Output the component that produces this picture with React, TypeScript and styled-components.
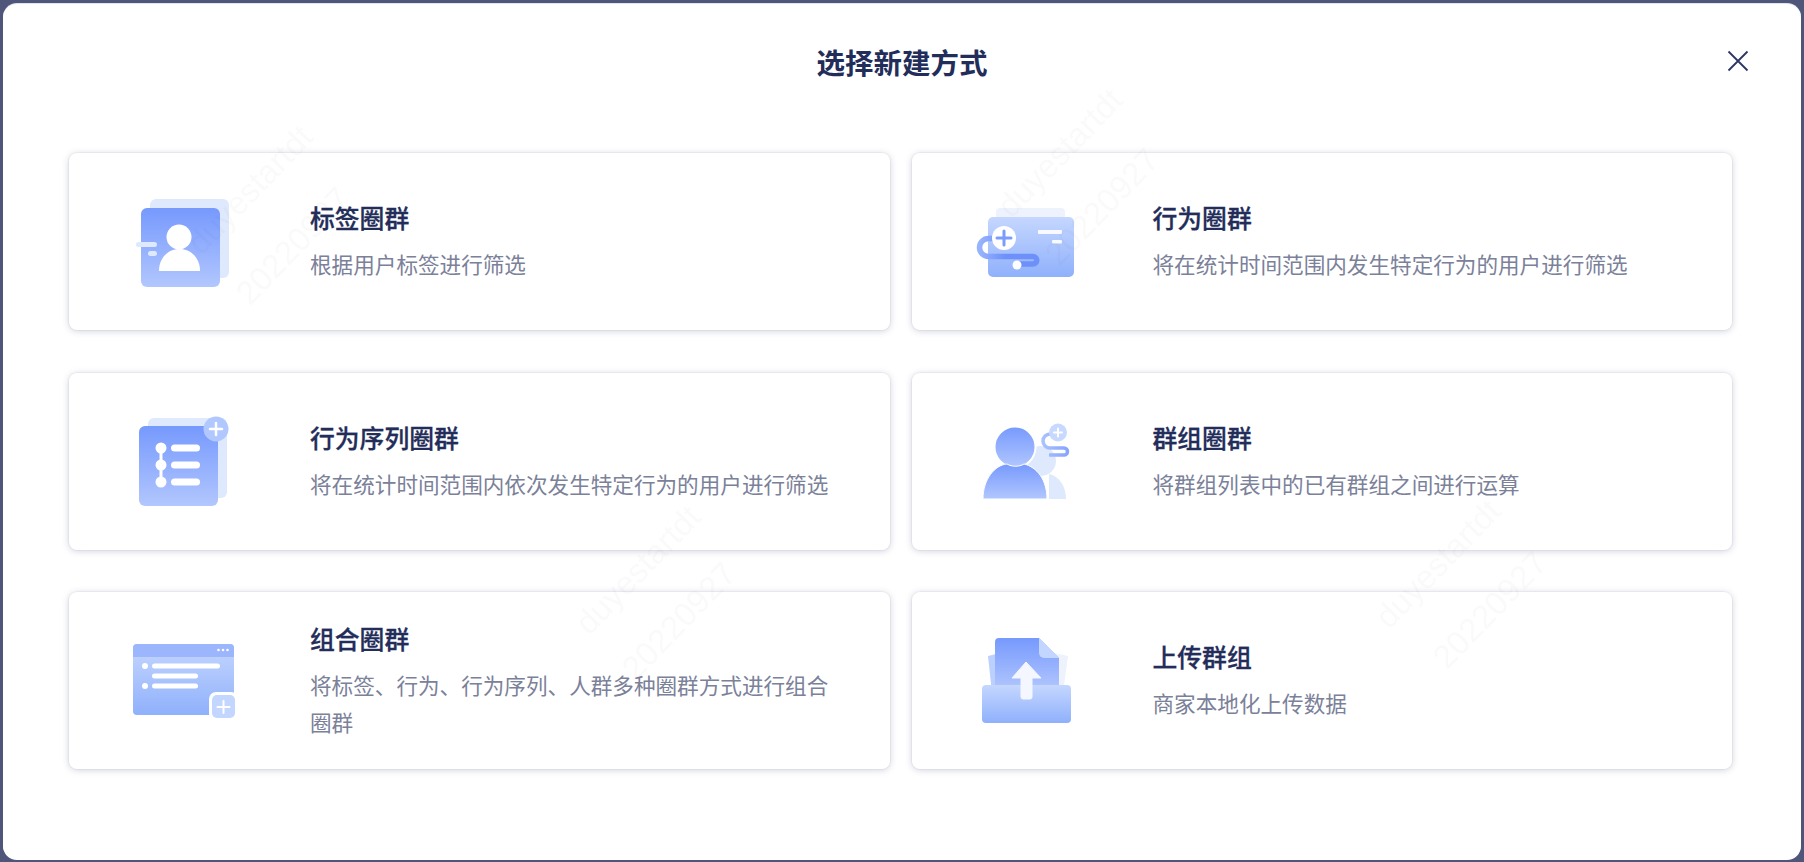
import type { ReactNode } from "react";
import styled, { createGlobalStyle } from "styled-components";

const GlobalStyle = createGlobalStyle`
  html, body { margin: 0; height: 100%; overflow: hidden; }
  body {
    background: #4f5679;
    font-family: "Noto Sans CJK SC", "Noto Sans", "Liberation Sans", sans-serif;
  }
`;

// shared gradients for the illustrations
const Grads = ({ id }: { id: string }) => (
  <defs>
    <linearGradient id={`${id}-deep`} x1="0" y1="0" x2="0" y2="1">
      <stop offset="0" stopColor="#7699fd" />
      <stop offset="1" stopColor="#b2c7fe" />
    </linearGradient>
    <linearGradient id={`${id}-soft`} x1="0" y1="0" x2="0" y2="1">
      <stop offset="0" stopColor="#c5d7ff" />
      <stop offset="1" stopColor="#8fb0fb" />
    </linearGradient>
    <linearGradient id={`${id}-tube`} x1="0" y1="0" x2="1" y2="0">
      <stop offset="0" stopColor="#98b3fd" />
      <stop offset="0.45" stopColor="#6d90fb" />
      <stop offset="1" stopColor="#6d90fb" />
    </linearGradient>
    <linearGradient id={`${id}-thin`} x1="0" y1="0" x2="1" y2="0">
      <stop offset="0" stopColor="#a9c1fe" />
      <stop offset="1" stopColor="#86a5fc" />
    </linearGradient>
  </defs>
);

const TagIcon = () => (
  <svg width="120" height="121" viewBox="125 181 120 121">
    <Grads id="tag" />
    <rect x="150" y="199" width="79" height="79" rx="6" fill="#dfe9fd" />
    <rect x="141" y="208" width="79" height="79" rx="6" fill="url(#tag-deep)" />
    <circle cx="179" cy="237" r="12.5" fill="#fff" />
    <path d="M159 271c0-13 9-22 20.500-22s20.500 9 20.500 22z" fill="#fff" />
    <rect x="136" y="242" width="21" height="5" rx="2.500" fill="#dfe9fd" />
    <rect x="148" y="251" width="9" height="5" rx="2.500" fill="#dfe9fd" />
  </svg>
);

const BehaviorIcon = () => (
  <svg width="120" height="121" viewBox="967 181 120 121">
    <Grads id="beh" />
    <rect x="995" y="208" width="69" height="20" rx="4" fill="#edf2fd" />
    <rect x="987" y="217" width="86" height="60" rx="5" fill="url(#beh-soft)" />
    <path
      d="M993 238.500H987.500A9 9 0 0 0 987.500 256.500H1032A3.750 3.750 0 0 1 1032 264H1016"
      fill="none"
      stroke="url(#beh-tube)"
      strokeWidth="5.500"
    />
    <circle cx="1003" cy="238" r="12" fill="#fff" />
    <path d="M1003 231v14M996 238h14" stroke="#7a9cfd" strokeWidth="3" strokeLinecap="round" />
    <circle cx="1016" cy="265" r="4.500" fill="#fff" />
    <rect x="1037" y="230" width="24" height="4" rx="1" fill="#fff" opacity=".9" />
    <rect x="1051" y="240" width="10" height="3.500" rx="1" fill="#fff" opacity=".9" />
  </svg>
);

const SequenceIcon = () => (
  <svg width="120" height="121" viewBox="125 400 120 121">
    <Grads id="seq" />
    <rect x="148" y="417" width="79" height="80" rx="6" fill="#dfe9fd" />
    <rect x="139" y="425" width="79" height="80" rx="6" fill="url(#seq-deep)" />
    <circle cx="216" cy="428" r="12.500" fill="#b0c8fe" />
    <path d="M216 422v12M210 428h12" stroke="#fff" strokeWidth="2.500" strokeLinecap="round" />
    <path d="M161 447v34" stroke="#fff" strokeWidth="3" />
    <circle cx="161" cy="447" r="5.500" fill="#fff" />
    <circle cx="161" cy="464" r="5.500" fill="#fff" />
    <circle cx="161" cy="481" r="5.500" fill="#fff" />
    <rect x="171" y="443.500" width="29" height="7" rx="3.500" fill="#fff" />
    <rect x="171" y="460.500" width="29" height="7" rx="3.500" fill="#fff" />
    <rect x="171" y="477.500" width="29" height="7" rx="3.500" fill="#fff" />
  </svg>
);

const GroupIcon = () => (
  <svg width="120" height="121" viewBox="967 400 120 121">
    <Grads id="grp" />
    <circle cx="1040" cy="460" r="15" fill="#dfe9fd" />
    <path d="M1048 498V473c10 2 17 12 17 25z" fill="#dfe9fd" />
    <path
      d="M1049 433A7 7 0 0 0 1049 447H1063A3.500 3.500 0 0 1 1063 454H1048"
      fill="none"
      stroke="url(#grp-thin)"
      strokeWidth="3.500"
    />
    <circle cx="1057" cy="431.500" r="9" fill="#c7d9fe" />
    <path d="M1057 427.500v8M1053 431.500h8" stroke="#fff" strokeWidth="2" strokeLinecap="round" />
    <circle cx="1014" cy="446" r="20.500" fill="url(#grp-deep)" stroke="#fff" strokeWidth="2" />
    <path
      d="M982 498c0-20 12-34 24-35 5 3 12 3 17 0 13 3 23 16 23 35z"
      fill="url(#grp-deep)"
      stroke="#fff"
      strokeWidth="1"
    />
  </svg>
);

const CombineIcon = () => (
  <svg width="120" height="121" viewBox="125 620 120 121">
    <Grads id="cmb" />
    <rect x="133" y="644" width="101" height="71" rx="4" fill="url(#cmb-soft)" />
    <path d="M133 657v-9a4 4 0 0 1 4-4h93a4 4 0 0 1 4 4v9z" fill="#9cb6fd" />
    <circle cx="218.500" cy="650" r="1.300" fill="#fff" />
    <circle cx="223" cy="650" r="1.300" fill="#fff" />
    <circle cx="227.500" cy="650" r="1.300" fill="#fff" />
    <circle cx="145" cy="666" r="3" fill="#fff" />
    <rect x="152" y="663.500" width="68" height="5" rx="2.500" fill="#fff" />
    <rect x="152" y="673.500" width="46" height="5" rx="2.500" fill="#fff" />
    <circle cx="145" cy="686" r="3" fill="#fff" />
    <rect x="152" y="683.500" width="46" height="5" rx="2.500" fill="#fff" />
    <rect x="209" y="692" width="29" height="29" rx="7" fill="#fff" />
    <rect x="212" y="695" width="23" height="23" rx="5" fill="#c3d6ff" />
    <path d="M223.500 701v12M217.500 707h12" stroke="#fff" strokeWidth="2" strokeLinecap="round" />
  </svg>
);

const UploadIcon = () => (
  <svg width="120" height="121" viewBox="967 620 120 121">
    <Grads id="upl" />
    <path d="M987 656l12-3 6 40h-14z" fill="#bcd0fe" />
    <path d="M1067 656l-14-3-6 40h15z" fill="#edf2fd" />
    <path
      d="M998 638h40l20 20v32h-64v-48a4 4 0 0 1 4-4z"
      fill="url(#upl-deep)"
    />
    <path d="M1038 638l20 20h-15a5 5 0 0 1-5-5z" fill="#c3d6ff" />
    <rect x="981" y="685" width="89" height="38" rx="4" fill="url(#upl-soft)" />
    <path
      d="M1025 662l15 16h-9v19a2 2 0 0 1-2 2h-7a2 2 0 0 1-2-2v-19h-9z"
      fill="#f4f7ff"
      stroke="#f4f7ff"
      strokeLinejoin="round"
    />
  </svg>
);

interface Method {
  title: string;
  desc: string;
  icon: ReactNode;
}

const methods: Method[] = [
  { title: "标签圈群", desc: "根据用户标签进行筛选", icon: <TagIcon /> },
  { title: "行为圈群", desc: "将在统计时间范围内发生特定行为的用户进行筛选", icon: <BehaviorIcon /> },
  { title: "行为序列圈群", desc: "将在统计时间范围内依次发生特定行为的用户进行筛选", icon: <SequenceIcon /> },
  { title: "群组圈群", desc: "将群组列表中的已有群组之间进行运算", icon: <GroupIcon /> },
  { title: "组合圈群", desc: "将标签、行为、行为序列、人群多种圈群方式进行组合圈群", icon: <CombineIcon /> },
  { title: "上传群组", desc: "商家本地化上传数据", icon: <UploadIcon /> },
];

const marks = [
  { x: 293, y: 246, nx: 250, ny: 190 },
  { x: 1102, y: 207, nx: 1060, ny: 153 },
  { x: 679, y: 621, nx: 638, ny: 570 },
  { x: 1490, y: 610, nx: 1438, ny: 564 },
];

export default function App() {
  return (
    <>
      <GlobalStyle />
      <Modal>
        <Header>
          <span />
          <Heading>选择新建方式</Heading>
          <CloseButton aria-label="关闭">
            <svg width="22" height="22" viewBox="0 0 22 22">
              <path d="M1.500 1.500l19 19M20.500 1.500l-19 19" stroke="#2d3663" strokeWidth="1.800" />
            </svg>
          </CloseButton>
        </Header>
        <Grid>
          {methods.map((m) => (
            <Card key={m.title}>
              <IconSlot>{m.icon}</IconSlot>
              <CardText>
                <CardTitle>{m.title}</CardTitle>
                <CardDesc>{m.desc}</CardDesc>
              </CardText>
            </Card>
          ))}
        </Grid>
      </Modal>
      {marks.map((m) => (
        <div key={m.x}>
          <Watermark $x={m.nx} $y={m.ny}>duyestartdt</Watermark>
          <Watermark $x={m.x} $y={m.y}>20220927</Watermark>
        </div>
      ))}
    </>
  );
}

const Modal = styled.main`
  box-sizing: border-box;
  margin: 4px 3px 2px 3px;
  height: 856px;
  background: #fff;
  border-radius: 14px;
  box-shadow: 0 -1px 0 #dfe3f2;
  display: flex;
  flex-direction: column;
`;

const Header = styled.header`
  box-sizing: border-box;
  display: grid;
  grid-template-columns: 1fr auto 1fr;
  align-items: start;
  height: 118px;
  padding: 0 52px;
`;

const Heading = styled.h1`
  margin: 38px 0 0;
  font-size: 28.500px;
  line-height: 40px;
  font-weight: 700;
  color: #232d5a;
`;

const CloseButton = styled.button`
  justify-self: end;
  margin-top: 46px;
  padding: 0;
  border: 0;
  background: none;
  width: 22px;
  height: 22px;
  display: flex;
`;

const Grid = styled.div`
  margin: 31px 69px 0 66px;
  display: grid;
  grid-template-columns: 1fr 1fr;
  grid-auto-rows: 177px;
  column-gap: 22px;
  row-gap: 42.500px;
`;

const Card = styled.section`
  display: flex;
  align-items: center;
  background: #fff;
  border-radius: 8px;
  box-shadow: 0 0 0 1px rgba(42, 52, 100, 0.04), 0 1px 7px rgba(42, 52, 100, 0.22);
`;

const IconSlot = styled.div`
  flex: none;
  width: 120px;
  height: 121px;
  margin: 0 65px 0 56px;

  svg {
    display: block;
  }
`;

const CardText = styled.div`
  width: 530px;
  padding-bottom: 2px;
`;

const CardTitle = styled.h2`
  margin: 0 0 10px;
  font-size: 24.800px;
  line-height: 36px;
  font-weight: 500;
  -webkit-text-stroke: 0.3px #232d5a;
  color: #232d5a;
`;

const CardDesc = styled.p`
  margin: 0;
  font-size: 21.600px;
  line-height: 37px;
  color: #7b8199;
`;

const Watermark = styled.span<{ $x: number; $y: number }>`
  position: fixed;
  left: ${(p) => p.$x}px;
  top: ${(p) => p.$y}px;
  transform: translate(-50%, -50%) rotate(-46deg);
  font-family: "Liberation Sans", sans-serif;
  font-size: 33px;
  color: rgba(40, 50, 90, 0.022);
  white-space: nowrap;
  pointer-events: none;
`;
